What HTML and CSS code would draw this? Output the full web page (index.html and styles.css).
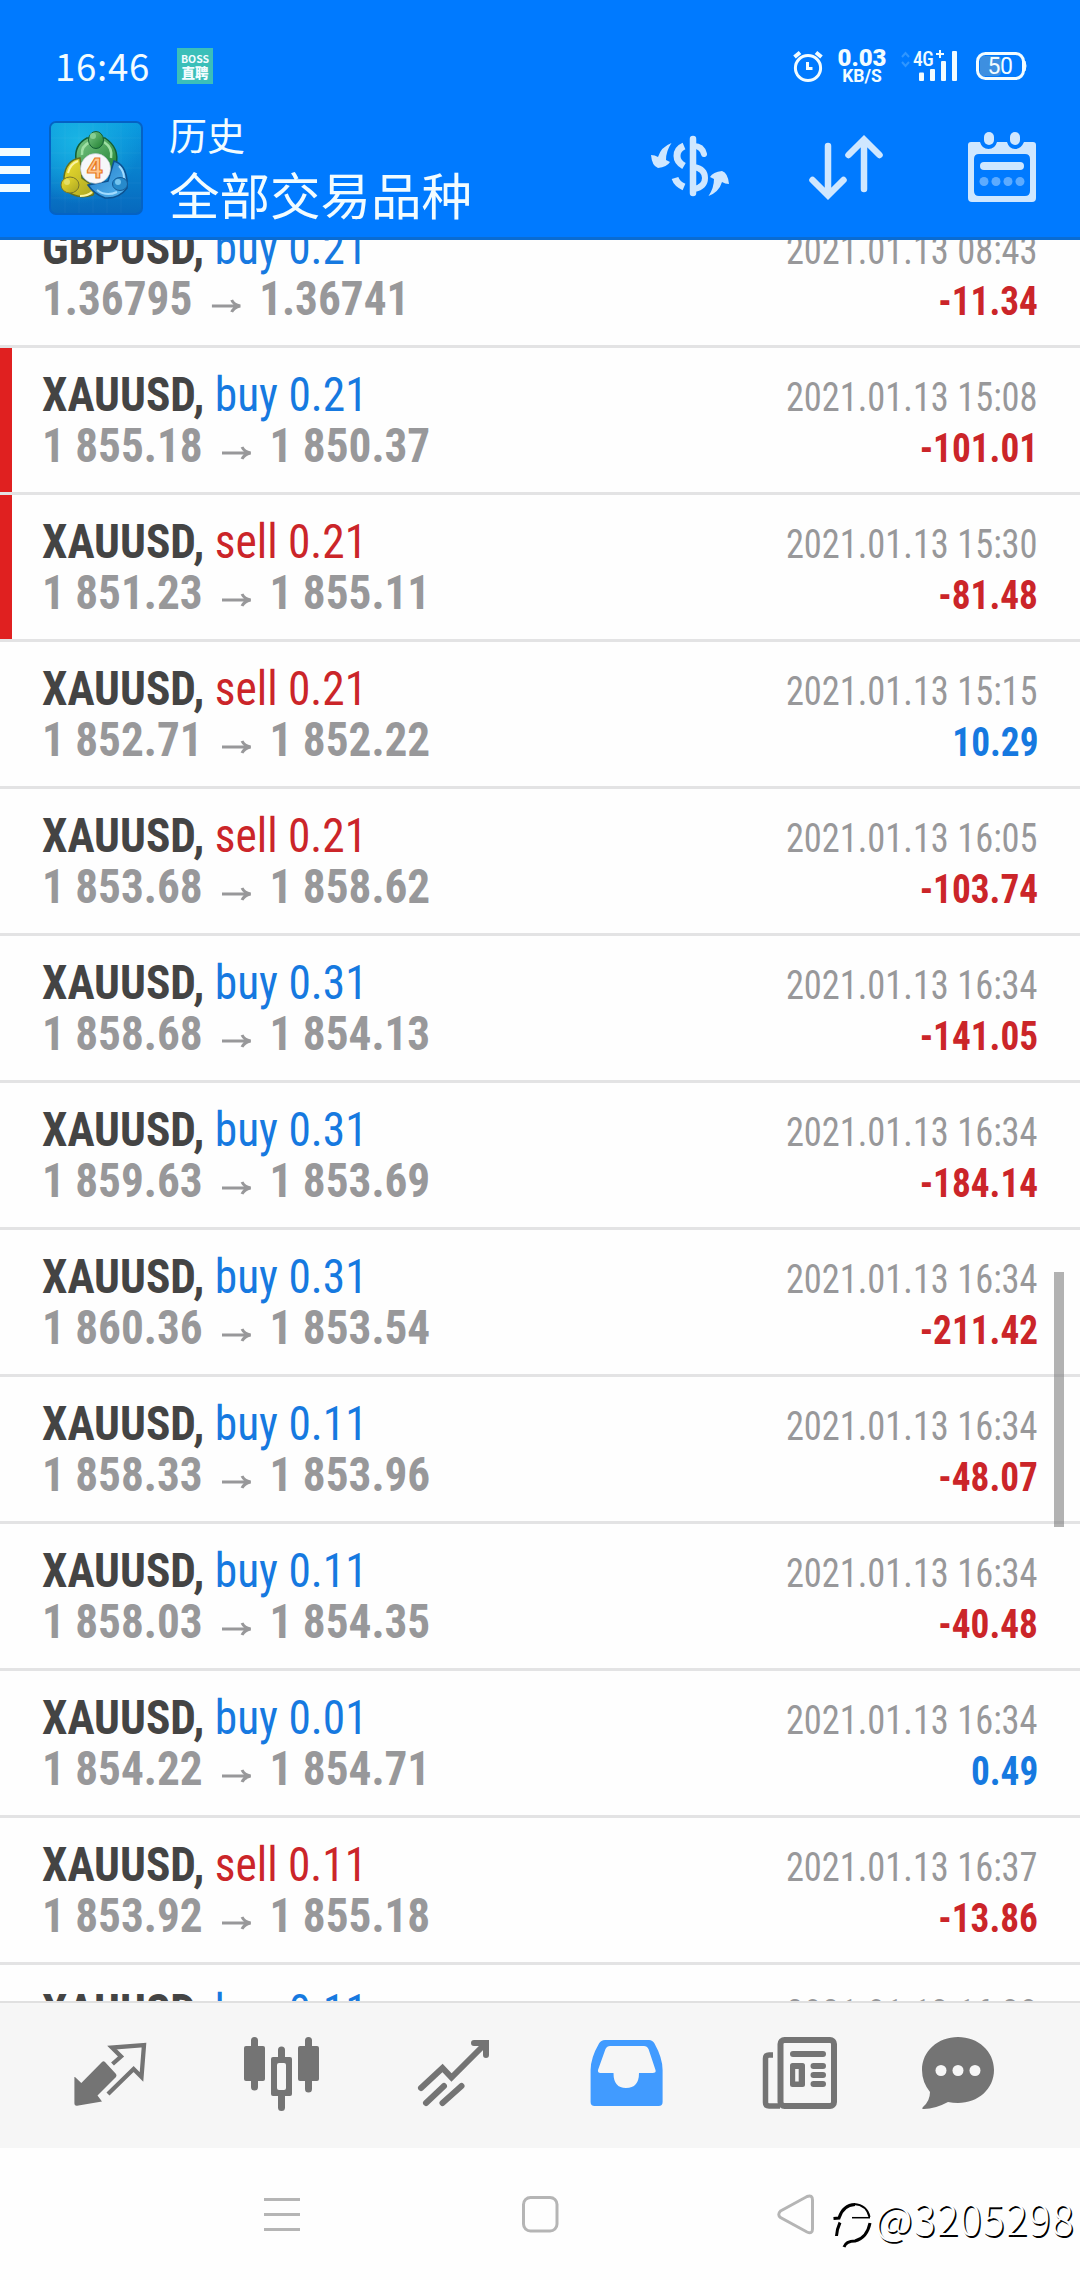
FILE: index.html
```html
<!DOCTYPE html>
<html lang="zh-CN">
<head>
<meta charset="utf-8">
<title>历史</title>
<link rel="stylesheet" href="styles.css">
</head>
<body>
<svg width="0" height="0" class="defs">
  <symbol id="arrow" viewBox="0 0 30 14" preserveAspectRatio="none"><path d="M0 7H27M20 1Q22 5.500 28.500 7Q22 8.500 20 13" fill="none" stroke="currentColor" stroke-width="3"/></symbol>
</svg>
<div class="screen">
  <header class="header">
    <div class="status">
      <span class="clock">16:46</span>
      <span class="boss"><b>BOSS</b><i>直聘</i></span>
      <svg class="alarm" viewBox="792 48 32 36"><g fill="none" stroke="#f2fcff" stroke-width="3"><ellipse cx="808" cy="68" rx="12.600" ry="12.600"/><path d="M794.500 57L800 52.500M821.500 57L816 52.500" stroke-width="4"/><path d="M807.500 62V68.500H812.500"/></g></svg>
      <span class="speed"><b>0.03</b><i>KB/S</i></span>
      <svg class="signal" viewBox="900 48 60 36"><path d="M902 57L905.500 53L909 57M902 62L905.500 66L909 62" fill="none" stroke="#2f96ff" stroke-width="2"/><text x="913" y="65.500" class="net">4G</text><path d="M936 54H944M940 50V58" stroke="#f2fcff" stroke-width="2"/><g fill="#f2fcff"><rect x="919" y="72.500" width="5" height="8.500" rx="1"/><rect x="930" y="69" width="5" height="12" rx="1"/><rect x="941" y="61" width="5" height="20" rx="1"/><rect x="952" y="51" width="5" height="30" rx="1"/></g></svg>
      <svg class="battery" viewBox="974 48 56 36"><rect x="980" y="56" width="21" height="20" rx="4" fill="#3d8fe0"/><rect x="977.500" y="53.500" width="46" height="25" rx="8" fill="none" stroke="#f2fcff" stroke-width="3"/><path d="M1024 61H1025Q1027 66 1025 71H1024Z" fill="#f2fcff" stroke="#f2fcff"/><text x="1000" y="74" text-anchor="middle" class="level">50</text></svg>
    </div>
    <div class="toolbar">
      <span class="menu"><i></i><i></i><i></i></span>
      <svg class="logo" viewBox="49 121 94 94">
        <defs>
          <linearGradient id="tile" x1="0" y1="0" x2="0" y2="1"><stop offset="0" stop-color="#0a9be0"/><stop offset="1" stop-color="#0768bd"/></linearGradient>
          <radialGradient id="glow" cx=".3" cy=".2" r=".7"><stop offset="0" stop-color="#19b4e4"/><stop offset="1" stop-color="#19b4e4" stop-opacity="0"/></radialGradient>
          <linearGradient id="gr" x1="0" y1="0" x2="1" y2="1"><stop offset="0" stop-color="#7cc988"/><stop offset="1" stop-color="#1d7d2e"/></linearGradient>
          <linearGradient id="ye" x1="0" y1="0" x2="1" y2="1"><stop offset="0" stop-color="#f0e02e"/><stop offset="1" stop-color="#a8a322"/></linearGradient>
          <linearGradient id="bl" x1="0" y1="0" x2="1" y2="1"><stop offset="0" stop-color="#1d79c9"/><stop offset="1" stop-color="#58b6ee"/></linearGradient>
        </defs>
        <rect x="50" y="122" width="92" height="92" rx="6" fill="url(#tile)" stroke="#0562c4" stroke-width="2"/>
        <rect x="51" y="123" width="90" height="90" rx="5" fill="url(#glow)"/>
        <path d="M65 123V213M79 123V213M93 123V213M107 123V213M121 123V213M51 138H141M51 153H141M51 168H141M51 183H141M51 198H141" stroke="#fff" stroke-opacity=".04"/>
        <path d="M76 160Q74 145 87 138H105Q120 148 116 165L112 173L80 165Z" fill="url(#gr)" stroke="#145f35" stroke-width="1.500"/>
        <path d="M82 155Q81 146 90 142M111 158Q113 148 104 142" fill="none" stroke="#9fe0a4" stroke-width="2.500"/>
        <path d="M80 158Q66 160 64 177L66 190Q77 200 93 195L96 188L82 178Z" fill="url(#ye)" stroke="#65701f" stroke-width="1.500"/>
        <path d="M68 173Q70 164 78 161M80 196Q88 196 92 192" fill="none" stroke="#fbf4a0" stroke-width="2"/>
        <path d="M114 161Q125 164 127 180V188Q119 199 105 198Q94 194 88 185L108 181Z" fill="url(#bl)" stroke="#0d5290" stroke-width="1.500"/>
        <path d="M97 190Q106 197 117 192M119 166Q124 171 124 178" fill="none" stroke="#a2dcff" stroke-width="2"/>
        <ellipse cx="96" cy="140" rx="7.500" ry="8.500" fill="url(#gr)" stroke="#145f35"/>
        <ellipse cx="70" cy="185" rx="9" ry="8" fill="url(#ye)" stroke="#76752a"/>
        <ellipse cx="120" cy="184" rx="7.500" ry="6.500" fill="#278acb" stroke="#145996"/>
        <circle cx="118" cy="182" r="3" fill="#75c4ef"/><circle cx="93" cy="136" r="3" fill="#86ce92"/><circle cx="67" cy="182" r="3" fill="#e5df63"/>
        <circle cx="95.500" cy="168.500" r="15" fill="#f6f7fa" stroke="#b9c4cf" stroke-width=".6"/>
        <text x="95" y="178" text-anchor="middle" class="four">4</text>
      </svg>
      <div class="titles"><span class="title">历史</span><span class="subtitle">全部交易品种</span></div>
      <svg class="actions" viewBox="640 126 410 86">
        <g fill="none" stroke="#cfe7ff" stroke-width="6.500" stroke-linecap="round">
          <path d="M693 139V193"/>
          <path d="M694 146Q702 146 704 154M694 167Q705 169 705 178Q705 187 694 189" stroke-width="6"/>
          <path d="M684 146Q677 149 677 156Q677 162 684 166M675 178Q677 184 684 187" stroke-width="7" stroke-linecap="butt"/>
          <path d="M828 146V195M812.500 180L828 195.500L843.500 180M864 189V140M848.500 155L864 139.500L879.500 155"/>
        </g>
        <g fill="#cfe7ff">
          <path id="turn" d="M651 155Q655 155 658 157Q661 147 671.500 143Q666 151 666 160L670 162Q667 167 658 168Q652 166 651 155Z"/>
          <use href="#turn" transform="rotate(180 690 169.500)"/>
          <path fill-rule="evenodd" d="M971 142H980Q982 149 988.500 149Q995 149 997 142H1007Q1009 149 1015 149Q1021 149 1024 142H1033Q1036 142 1036 145V198Q1036 202 1032 202H972Q968 202 968 198V145Q968 142 971 142ZM979 154Q974 154 974 159V191Q974 196 979 196H1025Q1030 196 1030 191V159Q1030 154 1025 154Z"/>
          <rect x="984" y="132" width="10" height="13" rx="5"/><rect x="1010" y="132" width="10" height="13" rx="5"/>
          <rect x="980" y="162" width="44" height="8" rx="4"/>
          <g opacity=".45"><circle cx="984" cy="181.500" r="4.500"/><circle cx="996" cy="181.500" r="4.500"/><circle cx="1008" cy="181.500" r="4.500"/><circle cx="1020" cy="181.500" r="4.500"/></g>
        </g>
      </svg>
    </div>
  </header>

  <main class="list">
    <div class="row"><div class="line"><span class="deal"><b>GBPUSD,</b> <span class="buy">buy 0.21</span></span><span class="date">2021.01.13 08:43</span></div><div class="line"><span class="price">1.36795<svg><use href="#arrow"/></svg>1.36741</span><span class="profit loss">-11.34</span></div></div>
    <div class="row marked"><div class="line"><span class="deal"><b>XAUUSD,</b> <span class="buy">buy 0.21</span></span><span class="date">2021.01.13 15:08</span></div><div class="line"><span class="price">1 855.18<svg><use href="#arrow"/></svg>1 850.37</span><span class="profit loss">-101.01</span></div></div>
    <div class="row marked"><div class="line"><span class="deal"><b>XAUUSD,</b> <span class="sell">sell 0.21</span></span><span class="date">2021.01.13 15:30</span></div><div class="line"><span class="price">1 851.23<svg><use href="#arrow"/></svg>1 855.11</span><span class="profit loss">-81.48</span></div></div>
    <div class="row"><div class="line"><span class="deal"><b>XAUUSD,</b> <span class="sell">sell 0.21</span></span><span class="date">2021.01.13 15:15</span></div><div class="line"><span class="price">1 852.71<svg><use href="#arrow"/></svg>1 852.22</span><span class="profit gain">10.29</span></div></div>
    <div class="row"><div class="line"><span class="deal"><b>XAUUSD,</b> <span class="sell">sell 0.21</span></span><span class="date">2021.01.13 16:05</span></div><div class="line"><span class="price">1 853.68<svg><use href="#arrow"/></svg>1 858.62</span><span class="profit loss">-103.74</span></div></div>
    <div class="row"><div class="line"><span class="deal"><b>XAUUSD,</b> <span class="buy">buy 0.31</span></span><span class="date">2021.01.13 16:34</span></div><div class="line"><span class="price">1 858.68<svg><use href="#arrow"/></svg>1 854.13</span><span class="profit loss">-141.05</span></div></div>
    <div class="row"><div class="line"><span class="deal"><b>XAUUSD,</b> <span class="buy">buy 0.31</span></span><span class="date">2021.01.13 16:34</span></div><div class="line"><span class="price">1 859.63<svg><use href="#arrow"/></svg>1 853.69</span><span class="profit loss">-184.14</span></div></div>
    <div class="row"><div class="line"><span class="deal"><b>XAUUSD,</b> <span class="buy">buy 0.31</span></span><span class="date">2021.01.13 16:34</span></div><div class="line"><span class="price">1 860.36<svg><use href="#arrow"/></svg>1 853.54</span><span class="profit loss">-211.42</span></div></div>
    <div class="row"><div class="line"><span class="deal"><b>XAUUSD,</b> <span class="buy">buy 0.11</span></span><span class="date">2021.01.13 16:34</span></div><div class="line"><span class="price">1 858.33<svg><use href="#arrow"/></svg>1 853.96</span><span class="profit loss">-48.07</span></div></div>
    <div class="row"><div class="line"><span class="deal"><b>XAUUSD,</b> <span class="buy">buy 0.11</span></span><span class="date">2021.01.13 16:34</span></div><div class="line"><span class="price">1 858.03<svg><use href="#arrow"/></svg>1 854.35</span><span class="profit loss">-40.48</span></div></div>
    <div class="row"><div class="line"><span class="deal"><b>XAUUSD,</b> <span class="buy">buy 0.01</span></span><span class="date">2021.01.13 16:34</span></div><div class="line"><span class="price">1 854.22<svg><use href="#arrow"/></svg>1 854.71</span><span class="profit gain">0.49</span></div></div>
    <div class="row"><div class="line"><span class="deal"><b>XAUUSD,</b> <span class="sell">sell 0.11</span></span><span class="date">2021.01.13 16:37</span></div><div class="line"><span class="price">1 853.92<svg><use href="#arrow"/></svg>1 855.18</span><span class="profit loss">-13.86</span></div></div>
    <div class="row"><div class="line"><span class="deal"><b>XAUUSD,</b> <span class="buy">buy 0.11</span></span><span class="date">2021.01.13 16:38</span></div></div>
    <span class="scrollbar"></span>
  </main>

  <nav class="tabs">
    <svg viewBox="24 2003 172 145"><path d="M75 2077L81.300 2083L102 2062Q103.500 2060.500 105 2062L116 2074Q117 2075.500 116 2077L97.500 2095.500L102 2101.500L77 2105.700Q74.400 2106 74.400 2103V2077Z" fill="#747474"/><path d="M112.500 2064L121 2056.500L112 2047.500L144 2045L141.500 2077L133.600 2069L108 2094" fill="none" stroke="#747474" stroke-width="4.300"/></svg>
    <svg viewBox="196 2003 172 145"><g stroke="#747474" stroke-width="7" stroke-linecap="round"><path d="M254.500 2040.500V2087M308.500 2040.500V2089M281.500 2050V2060M281.500 2093V2107.500"/></g><g fill="#747474"><rect x="244" y="2046" width="21" height="35" rx="2"/><rect x="298" y="2046" width="21" height="35" rx="2"/><rect x="271" y="2057" width="21" height="39" rx="2"/></g><rect x="277" y="2063" width="9" height="27" rx="2" fill="#f6f6f6"/></svg>
    <svg viewBox="368 2003 172 145"><g fill="none" stroke="#747474" stroke-width="6" stroke-linecap="round"><path d="M421 2088L442.500 2068L451.500 2077.500L485 2044M444 2086L426 2103M461.500 2086L442.500 2103"/><path d="M474 2043H486V2055"/></g></svg>
    <svg viewBox="540 2003 172 145"><path fill="#419bff" fill-rule="evenodd" d="M605 2040H649Q652.500 2040 654.500 2043.500Q662.600 2058 662.600 2070V2102Q662.600 2106 658.600 2106H594.600Q590.600 2106 590.600 2102V2070Q590.600 2058 599 2043.500Q601 2040 605 2040ZM610 2046Q607 2046 605.500 2049L598 2070Q597.500 2073 600.500 2073H613.500Q613.500 2088 626 2088Q639 2088 639 2073H652.500Q656.500 2073 655.500 2070L648.500 2049Q647 2046 644 2046Z"/></svg>
    <svg viewBox="712 2003 172 145"><g fill="none" stroke="#747474"><rect x="780.500" y="2040" width="53.500" height="66" rx="4" stroke-width="6"/><path d="M773 2055H769Q765.500 2055 765.500 2058.500V2102.500Q765.500 2106 769 2106H780" stroke-width="5.500"/><path d="M793 2054H823M813.500 2066H823M813.500 2075H823M813.500 2084H823" stroke-width="6" stroke-linecap="round"/></g><rect x="790" y="2063" width="15" height="24" rx="2.500" fill="#747474"/><rect x="795.200" y="2069" width="3.500" height="12.500" fill="#f6f6f6"/></svg>
    <svg viewBox="884 2003 172 145"><path fill="#747474" d="M958 2037C978 2037 994 2051 994 2070C994 2089 978 2103 958 2103Q953 2103 948 2102Q935 2109 924 2109Q921 2109 923 2107Q930 2101 930 2092Q922 2082 922 2070C922 2051 938 2037 958 2037Z"/><g fill="#f6f6f6"><circle cx="941" cy="2070.500" r="5.500"/><circle cx="958" cy="2070.500" r="5.500"/><circle cx="975" cy="2070.500" r="5.500"/></g></svg>
  </nav>

  <footer class="sysnav">
    <svg viewBox="0 2148 830 132"><g fill="none" stroke="#b5b5b5" stroke-width="3"><path d="M264 2199.500H300M264 2214.500H300M264 2229.500H300"/><rect x="523.500" y="2197.500" width="33.500" height="33.500" rx="7"/><path d="M780.500 2211L807 2196.500Q812.500 2194.500 812.500 2200V2229Q812.500 2234.500 807 2232L780.500 2217.500Q777 2214.500 780.500 2211Z"/></g></svg>
    <svg class="mark" viewBox="830 2148 44 132"><g fill="none" stroke="#000"><path d="M833.500 2218.500L839 2218Q843 2205 855 2204.500" stroke-width="3"/><path d="M854 2204Q867 2205 869.500 2217" stroke-width="2"/><path d="M852 2217.700H870" stroke-width="1.500"/><path d="M840 2222.500Q837 2229 836.500 2236" stroke-width="3"/><path d="M870 2223Q867 2238 855 2241Q846 2241 844 2247" stroke-width="3"/></g></svg>
    <span class="watermark">@3205298</span>
  </footer>
</div>
</body>
</html>
```
FILE: styles.css
```css
* { box-sizing: border-box; }
body { margin: 0; width: 1080px; height: 2280px; overflow: hidden; background: #fefefe; font-family: "Roboto Condensed", Roboto, "Noto Sans CJK SC", sans-serif; }
.defs { position: absolute; }
svg { display: block; flex: none; }
i { font-style: normal; }
.screen { display: flex; flex-direction: column; height: 2280px; }
.header { height: 240px; flex: none; background: #007aff; border-bottom: 3px solid #0a6cd2; color: #f2fcff; }

.status { display: flex; align-items: center; height: 84px; padding: 48px 0 0 55px; }
.clock { width: 122px; font: 400 36.500px/36px "Noto Sans CJK SC", sans-serif; letter-spacing: .8px; }
.boss { display: flex; flex-direction: column; align-items: center; justify-content: center; width: 36px; height: 36px; background: #3bbfb9; margin-right: 579px; font-family: "Noto Sans CJK SC", sans-serif; }
.boss b { font-size: 10.500px; line-height: 12px; }
.boss i { font-size: 13.500px; line-height: 15px; font-weight: 900; }
.alarm { width: 32px; height: 36px; }
.speed { display: flex; flex-direction: column; align-items: center; width: 76px; font-family: Roboto, sans-serif; font-weight: 700; }
.speed b { font-size: 24px; line-height: 20px; }
.speed i { font-size: 17.500px; line-height: 16px; }
.signal { width: 60px; height: 36px; }
.net { font: 500 19.500px Roboto, sans-serif; font-stretch: 85%; fill: #f2fcff; letter-spacing: -.5px; }
.battery { width: 56px; height: 36px; margin-left: 14px; }
.level { font: 400 23px Roboto, sans-serif; fill: #f2fcff; letter-spacing: -.5px; }

.toolbar { display: flex; height: 153px; align-items: flex-start; }
.menu { display: flex; flex-direction: column; gap: 10px; width: 49px; padding-top: 64px; }
.menu i { width: 30px; height: 8px; background: #f2fcff; }
.logo { width: 94px; height: 94px; margin-top: 37px; }
.four { font: 700 27px "Noto Sans CJK SC", sans-serif; fill: #ffc58a; stroke: #e8791c; stroke-width: 1.200px; }
.titles { display: flex; flex-direction: column; width: 471px; padding: 30px 0 0 26px; font-family: "Noto Sans CJK SC", sans-serif; }
.title { font-size: 38px; line-height: 40px; }
.subtitle { font-size: 50.500px; line-height: 60px; padding-top: 9px; }
.actions { width: 410px; height: 86px; margin: 42px 0 0 26px; }

.list { position: relative; flex: none; height: 1761px; overflow: hidden; }
.row { height: 147px; padding: 21px 42px 0; border-bottom: 3px solid #e3e3e4; font-stretch: 75%; }
.row:first-child { margin-top: -39px; }
.marked { background: linear-gradient(#e02020, #e02020) 0 0 / 12px 100% no-repeat padding-box; }
.line { display: flex; justify-content: space-between; align-items: baseline; height: 51px; font-size: 48px; line-height: 51px; white-space: nowrap; }
.deal { transform: scaleX(.945); transform-origin: left; }
.deal b { color: #444; font-weight: 700; }
.buy { color: #1679e0; }
.sell { color: #cb2529; }
.date { font-size: 40px; color: #98989a; font-weight: 400; transform: scaleX(.91); transform-origin: right; }
.price { color: #98989a; font-weight: 700; transform: scaleX(.942); transform-origin: left; }
.price svg { display: inline-block; width: 32px; height: 14px; margin: 0 18.500px 0 20.500px; vertical-align: 2px; }
.profit { font-size: 40px; font-weight: 700; transform: scaleX(.932); transform-origin: right; }
.loss { color: #cb2529; }
.gain { color: #1679e0; }
.scrollbar { position: absolute; left: 1054px; top: 1032px; width: 10px; height: 255px; background: rgba(130, 130, 130, .62); }

.tabs { display: flex; flex: none; height: 147px; padding: 0 24px; border-top: 2px solid #e0e0e0; background: #f6f6f6; }
.tabs svg { width: 172px; height: 145px; }

.sysnav { display: flex; height: 132px; overflow: hidden; }
.sysnav svg { width: 830px; height: 132px; }
.sysnav .mark { width: 44px; }
.watermark { padding-left: 1px; font: 300 41px/60px "Noto Sans CJK SC", sans-serif; letter-spacing: 1.100px; margin-top: 39px; color: #fff; text-shadow: 1.500px 1.500px 0 #000; }
```
